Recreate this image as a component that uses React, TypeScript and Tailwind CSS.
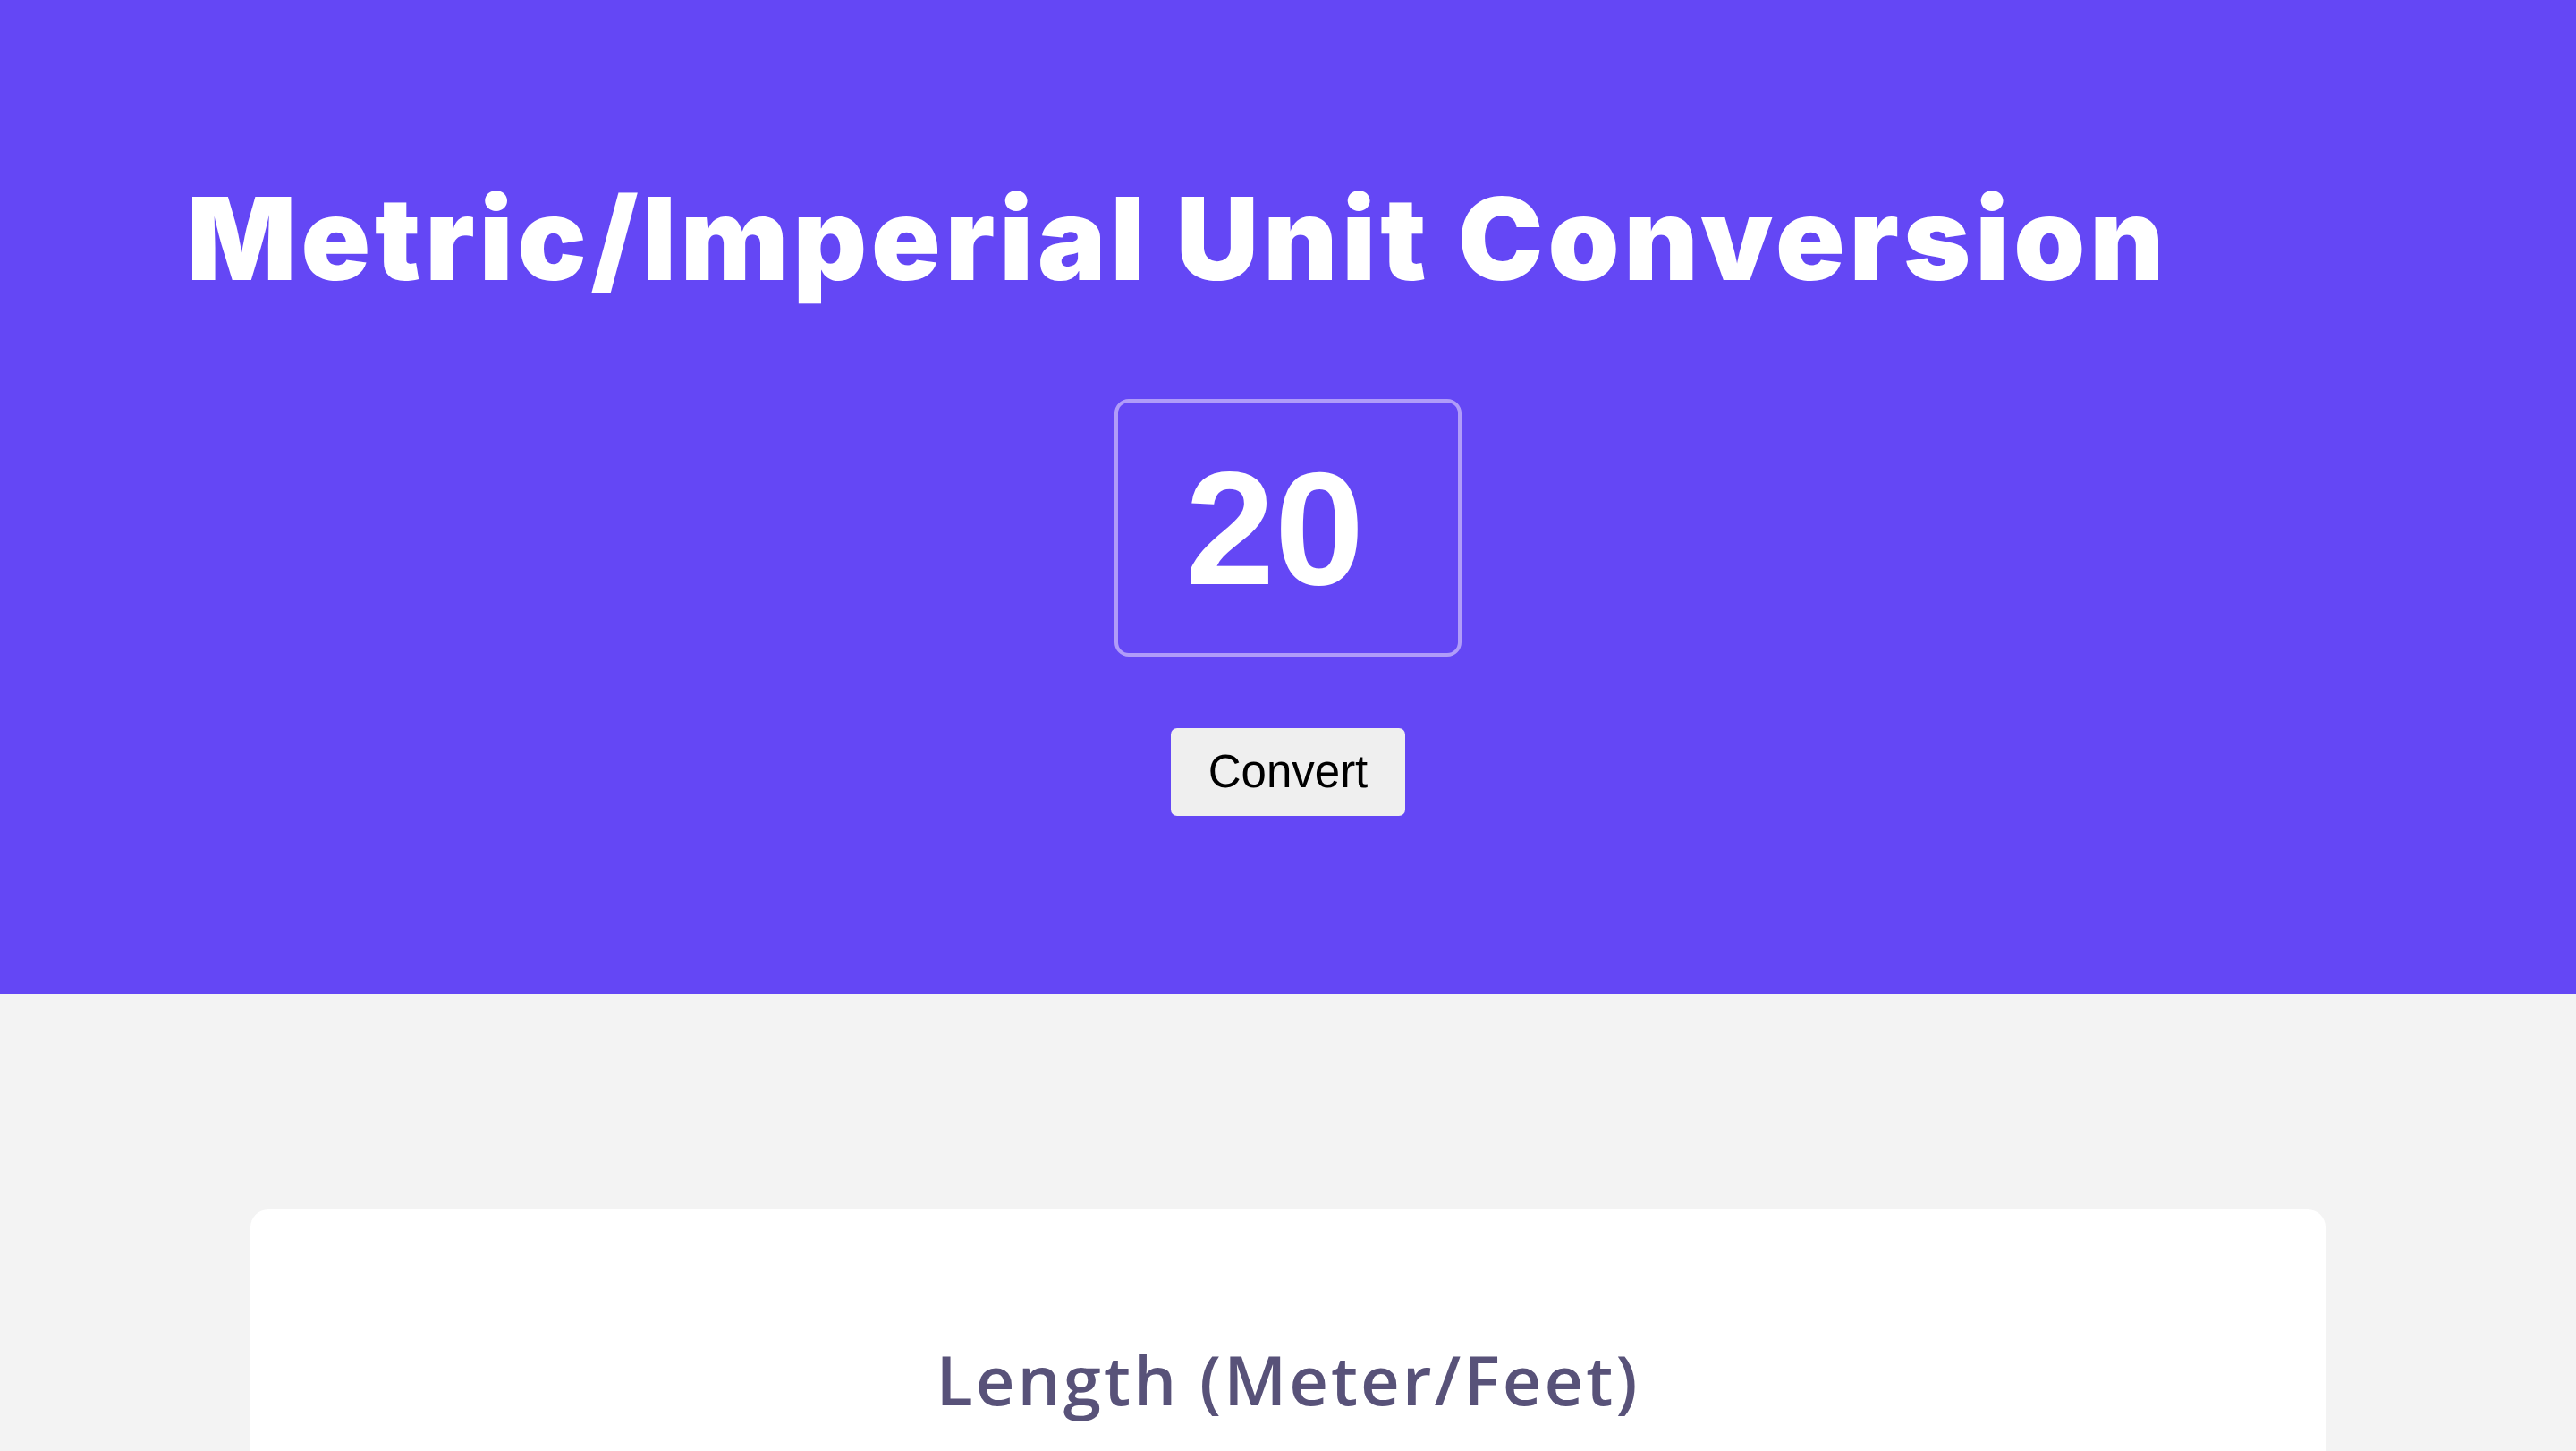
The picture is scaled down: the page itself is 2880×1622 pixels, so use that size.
import { useState } from 'react';

export default function App() {
  const [value, setValue] = useState('20');

  return (
    <div className="min-h-screen bg-[#f3f3f3]" style={{ fontFamily: 'Inter, "Liberation Sans", sans-serif' }}>
      {/* header */}
      <header className="h-[1111px] bg-[#6447f5] flex flex-col">
        <h1 className="pt-[203px] pl-[209px] text-[128px] leading-none font-black tracking-[5px] text-white font-['Inter',sans-serif]">
          Metric/Imperial Unit Conversion
        </h1>

        <div className="flex flex-col items-center">
          <input
            type="text"
            value={value}
            onChange={(e) => setValue(e.target.value)}
            className="mt-[115px] w-[388px] h-[288px] pl-[75px] border-[4px] border-[#b09cf9] rounded-[16px] bg-transparent text-white text-[180px] font-bold font-['Liberation_Sans',Arial,sans-serif] outline-none"
          />
          <button className="mt-[80px] w-[262px] h-[98px] bg-[#efefef] rounded-[7px] text-black text-[51px] font-['Liberation_Sans',Arial,sans-serif]">
            Convert
          </button>
        </div>
      </header>

      {/* results */}
      <main className="pt-[241px] px-[280px]">
        <div className="bg-white rounded-[20px] pt-[133px] pb-[120px] min-h-[600px]">
          <h2 className="text-center text-[76px] font-semibold tracking-[3px] text-[#585279] font-['Open_Sans',sans-serif]">
            Length (Meter/Feet)
          </h2>
        </div>
      </main>
    </div>
  );
}
